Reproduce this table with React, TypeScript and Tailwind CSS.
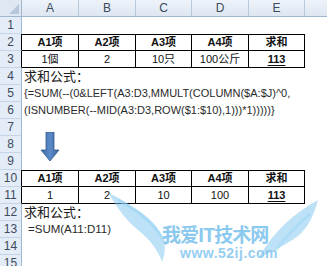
import React from "react";

const cols = [
  { l: "A", w: "w-[57px]" },
  { l: "B", w: "w-[57px]" },
  { l: "C", w: "w-[56px]" },
  { l: "D", w: "w-[57px]" },
  { l: "E", w: "w-[56px]" },
];

const font = { fontFamily: '"Liberation Sans", Arial, "Noto Sans CJK SC", sans-serif' };

function RowHead({ n, dark }: { n: number; dark?: boolean }) {
  return (
    <div
      className={`w-[22px] shrink-0 h-full flex items-center justify-center bg-[#e4ecf7] border-b border-b-[#c5d3e6] border-r text-[12px] text-[#3b4a5c] ${
        dark ? "border-r-black" : "border-r-[#9eb6ce]"
      }`}
    >
      {n}
    </div>
  );
}

function Row({ n, children, dark }: { n: number; children?: React.ReactNode; dark?: boolean }) {
  return (
    <div className="flex h-[17px] items-stretch">
      <RowHead n={n} dark={dark} />
      <div className="flex-1 relative flex items-center">{children}</div>
    </div>
  );
}

function TableRow({ n, cells, header, topBorder }: { n: number; cells: string[]; header?: boolean; topBorder?: boolean }) {
  return (
    <div className="flex h-[17px] items-stretch">
      <RowHead n={n} dark />
      {cols.map((c, i) => (
        <div
          key={c.l}
          className={`${c.w} shrink-0 border-r border-b border-black ${topBorder ? "border-t" : ""} flex items-center justify-center text-[11px] text-[#111] ${
            header ? "font-bold" : ""
          }`}
        >
          {i === 4 && !header ? (
            <span className="font-bold underline underline-offset-2">{cells[i]}</span>
          ) : (
            cells[i]
          )}
        </div>
      ))}
    </div>
  );
}

export default function App() {
  return (
    <div className="w-[327px] h-[266px] overflow-hidden bg-white relative" style={font}>
      {/* column header */}
      <div className="flex h-[17px]">
        <div className="w-[22px] shrink-0 bg-[#dfe7f3] border-r border-b border-[#9eb6ce] relative overflow-hidden">
          <div className="absolute right-[2px] bottom-[2px] w-0 h-0 border-l-[10px] border-l-transparent border-b-[10px] border-b-[#b8c8dc]" />
        </div>
        {cols.map((c) => (
          <div
            key={c.l}
            className={`${c.w} shrink-0 bg-gradient-to-b from-[#eef3fa] to-[#dde6f2] border-r border-r-[#b9c9dc] border-b border-b-[#9eb6ce] flex items-center justify-center text-[12px] text-[#3b4a5c]`}
          >
            {c.l}
          </div>
        ))}
        <div className="flex-1 bg-gradient-to-b from-[#eef3fa] to-[#dde6f2] border-b border-b-[#9eb6ce]" />
      </div>

      <Row n={1} />
      <TableRow n={2} cells={["A1项", "A2项", "A3项", "A4项", "求和"]} header topBorder />
      <TableRow n={3} cells={["1個", "2", "10只", "100公斤", "113"]} />
      <Row n={4}>
        <span className="pl-[2px] text-[13px] text-[#1a1a1a] whitespace-nowrap">求和公式：</span>
      </Row>
      <Row n={5}>
        <span className="pl-[2px] text-[11px] text-[#2a2a2a] whitespace-nowrap">
          {"{=SUM(--(0&LEFT(A3:D3,MMULT(COLUMN($A:$J)^0,"}
        </span>
      </Row>
      <Row n={6}>
        <span className="pl-[2px] text-[11px] text-[#2a2a2a] whitespace-nowrap">
          {"(ISNUMBER(--MID(A3:D3,ROW($1:$10),1)))*1)))))}"}
        </span>
      </Row>
      <Row n={7}>
        <svg className="absolute left-[18px] top-[13px]" width="20" height="30" viewBox="0 0 20 30">
          <defs>
            <linearGradient id="ag" x1="0" x2="1" y1="0" y2="0">
              <stop offset="0" stopColor="#3d6aa3" />
              <stop offset="0.5" stopColor="#5b8bc9" />
              <stop offset="1" stopColor="#3b649b" />
            </linearGradient>
          </defs>
          <path d="M6 0 H14 V18 H19 L10 29 L1 18 H6 Z" fill="url(#ag)" stroke="#35598a" strokeWidth="0.8" />
        </svg>
      </Row>
      <Row n={8} />
      <Row n={9} />
      <TableRow n={10} cells={["A1项", "A2项", "A3项", "A4项", "求和"]} header topBorder />
      <TableRow n={11} cells={["1", "2", "10", "100", "113"]} />
      <Row n={12}>
        <span className="pl-[2px] text-[13px] text-[#1a1a1a] whitespace-nowrap">求和公式：</span>
      </Row>
      <Row n={13}>
        <span className="pl-[6px] text-[11.5px] text-[#2a2a2a] whitespace-nowrap">=SUM(A11:D11)</span>
      </Row>
      <Row n={14} />
      <Row n={15} />

      {/* watermark */}
      <svg className="absolute left-0 top-0 pointer-events-none" width="327" height="266" viewBox="0 0 327 266">
        <path d="M108 192 C130 205 150 215 160 232 C166 243 166 252 162 262 C158 250 150 240 138 230 C128 222 118 210 108 192 Z" fill="#7cc3ee" opacity="0.5" />
        <path d="M118 200 C140 212 158 226 166 245" stroke="#8fd0f5" strokeWidth="3" fill="none" opacity="0.45" />
        <path d="M318 200 C300 210 285 222 272 238 C266 246 262 252 258 258 C270 252 285 246 298 236 C308 228 314 215 318 200 Z" fill="#7cc3ee" opacity="0.5" />
        <path d="M310 214 C296 226 286 236 276 250" stroke="#9ad6f7" strokeWidth="3" fill="none" opacity="0.45" />
      </svg>
      <div
        className="absolute left-[162px] top-[220px] text-[19px] font-bold text-[#6fbcea] opacity-80 whitespace-nowrap tracking-[-1px] pointer-events-none"
        style={{ fontFamily: '"Noto Sans CJK SC", sans-serif' }}
      >
        我爱IT技术网
      </div>
      <div className="absolute left-[180px] top-[243px] text-[14px] font-bold text-[#7cc3ee] opacity-80 whitespace-nowrap tracking-[0.5px] pointer-events-none">
        www.52ij.com
      </div>
    </div>
  );
}
